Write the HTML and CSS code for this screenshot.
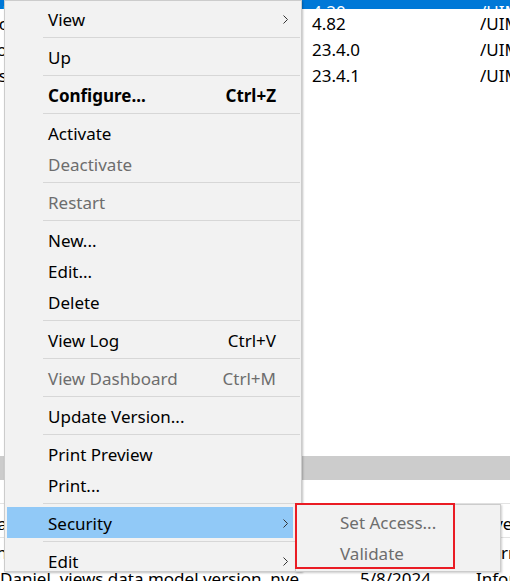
FILE: index.html
```html
<!DOCTYPE html>
<html>
<head>
<meta charset="utf-8">
<link rel="stylesheet" href="styles.css">
</head>
<body>
<div class="app">
  <div class="top-pane">
    <div class="row sel"><span class="c1"><span>Model</span></span><span></span><span class="c2">4.20</span><span class="c3">/UIMS</span></div>
    <div class="row"><span class="c1"><span>Generic</span></span><span></span><span class="c2">4.82</span><span class="c3">/UIMS</span></div>
    <div class="row"><span class="c1"><span>Demo</span></span><span></span><span class="c2">23.4.0</span><span class="c3">/UIMS</span></div>
    <div class="row"><span class="c1"><span>Tools</span></span><span></span><span class="c2">23.4.1</span><span class="c3">/UIMS</span></div>
  </div>
  <div class="splitter"></div>
  <div class="bottom-pane">
    <div class="thead"><span class="c1"><span>Na</span></span><span class="d-desc"></span><span class="d-date"></span><span class="d-type">Level</span></div>
    <div class="trow"><span class="c1"><span>Admin</span></span><span class="d-desc"></span><span class="d-date">5/8/2024</span><span class="d-type">Warning</span></div>
    <div class="trow"><span class="c1"></span><span class="d-desc">Daniel&nbsp;&nbsp;views data model version&nbsp;&nbsp;nve</span><span class="d-date">5/8/2024</span><span class="d-type">Information</span></div>
  </div>

  <div class="menu">
    <div class="item"><span class="label">View</span><span class="arrow"><svg width="5" height="9" viewBox="0 0 5 9"><path d="M0.5 0.5 L4.5 4.5 L0.5 8.5" fill="none" stroke="#333" stroke-width="1"/></svg></span></div>
    <div class="sep"></div>
    <div class="item"><span class="label">Up</span><span class="arrow"></span></div>
    <div class="sep"></div>
    <div class="item bold"><span class="label">Configure...</span><span class="key">Ctrl+Z</span><span class="arrow"></span></div>
    <div class="sep"></div>
    <div class="item"><span class="label">Activate</span><span class="arrow"></span></div>
    <div class="item dis"><span class="label">Deactivate</span><span class="arrow"></span></div>
    <div class="sep"></div>
    <div class="item dis"><span class="label">Restart</span><span class="arrow"></span></div>
    <div class="sep"></div>
    <div class="item"><span class="label">New...</span><span class="arrow"></span></div>
    <div class="item"><span class="label">Edit...</span><span class="arrow"></span></div>
    <div class="item"><span class="label">Delete</span><span class="arrow"></span></div>
    <div class="sep"></div>
    <div class="item"><span class="label">View Log</span><span class="key">Ctrl+V</span><span class="arrow"></span></div>
    <div class="sep"></div>
    <div class="item dis"><span class="label">View Dashboard</span><span class="key">Ctrl+M</span><span class="arrow"></span></div>
    <div class="sep"></div>
    <div class="item"><span class="label">Update Version...</span><span class="arrow"></span></div>
    <div class="sep"></div>
    <div class="item"><span class="label">Print Preview</span><span class="arrow"></span></div>
    <div class="item"><span class="label">Print...</span><span class="arrow"></span></div>
    <div class="sep"></div>
    <div class="item hl"><span class="label">Security</span><span class="arrow"><svg width="5" height="9" viewBox="0 0 5 9"><path d="M0.5 0.5 L4.5 4.5 L0.5 8.5" fill="none" stroke="#333" stroke-width="1"/></svg></span></div>
    <div class="sep"></div>
    <div class="item"><span class="label">Edit</span><span class="arrow"><svg width="5" height="9" viewBox="0 0 5 9"><path d="M0.5 0.5 L4.5 4.5 L0.5 8.5" fill="none" stroke="#333" stroke-width="1"/></svg></span></div>
  </div>

  <div class="submenu">
    <div class="sub-item dis">Set Access...</div>
    <div class="sub-item dis">Validate</div>
  </div>
  <div class="annot"></div>
</div>
</body>
</html>
```
FILE: styles.css
```css
html, body {
  margin: 0;
  padding: 0;
}
body {
  width: 510px;
  height: 581px;
  overflow: hidden;
  background: #ffffff;
  font-family: "Noto Sans", "Open Sans", sans-serif;
  font-size: 17px;
  color: #000;
}
.app {
  position: relative;
  width: 510px;
  height: 581px;
  overflow: hidden;
}

/* background list */
.top-pane {
  height: 456px;
}
.row {
  display: grid;
  grid-template-columns: 5px 307px 168px 30px;
  height: 26px;
  box-sizing: border-box;
  padding-top: 4px;
  line-height: 22px;
  white-space: nowrap;
}
.row.sel {
  height: 9px;
  padding-top: 0;
  line-height: 24px;
  overflow: hidden;
  align-items: end;
  background: #0078d7;
  color: #fff;
}
.c1 {
  display: flex;
  justify-content: flex-end;
  overflow: hidden;
}
.c1 > span {
  margin-right: -2px;
}
.c3 {
  overflow: hidden;
}
.splitter {
  height: 24px;
  background: #cccccc;
}
.bottom-pane {
  padding-top: 23px;
}
.thead, .trow {
  display: grid;
  grid-template-columns: 5px 355px 116px 34px;
  white-space: nowrap;
  line-height: 26px;
}
.thead {
  box-sizing: border-box;
  padding-top: 7px;
  height: 35px;
  border-top: 1px solid #e3e3e3;
  border-bottom: 1px solid #e3e3e3;
}
.trow {
  height: 26px;
  box-sizing: border-box;
  padding-top: 2px;
}
.d-desc, .d-type {
  overflow: hidden;
}
.d-desc {
  margin-left: -5px;
}

/* context menu */
.menu {
  position: absolute;
  left: 4px;
  top: 0;
  width: 298px;
  height: 572px;
  box-sizing: border-box;
  border: 1px solid #cccccc;
  background: #f2f2f2;
  padding-top: 2px;
  overflow: hidden;
  box-shadow: 1px 1px 2px rgba(0, 0, 0, 0.25);
}
.item {
  display: flex;
  align-items: center;
  height: 31px;
  margin: 0 8px 0 2px;
  padding-left: 41px;
  padding-top: 2px;
  box-sizing: border-box;
  white-space: nowrap;
}
.label {
  flex: 1;
}
.arrow {
  width: 17px;
  display: flex;
  align-items: center;
}
.arrow svg {
  margin-left: 7px;
  display: block;
}
.sep {
  height: 7px;
  box-sizing: border-box;
  padding: 3px 1px 0 38px;
}
.sep::after {
  content: "";
  display: block;
  border-top: 1px solid #d7d7d7;
}
.bold {
  font-weight: 700;
}
.dis {
  color: #6d6d6d;
}
.hl {
  background: #91c9f7;
}

/* submenu */
.submenu {
  position: absolute;
  left: 295px;
  top: 504px;
  width: 206px;
  height: 68px;
  box-sizing: border-box;
  border: 1px solid #cccccc;
  background: #f2f2f2;
  padding-top: 2px;
  box-shadow: 1px 1px 2px rgba(0, 0, 0, 0.2);
}
.sub-item {
  height: 31px;
  line-height: 31px;
  margin: 0 2px;
  padding-left: 42px;
  white-space: nowrap;
}
.annot {
  position: absolute;
  left: 295px;
  top: 503px;
  width: 160px;
  height: 66px;
  box-sizing: border-box;
  border: 2px solid #ea1c24;
}
```
